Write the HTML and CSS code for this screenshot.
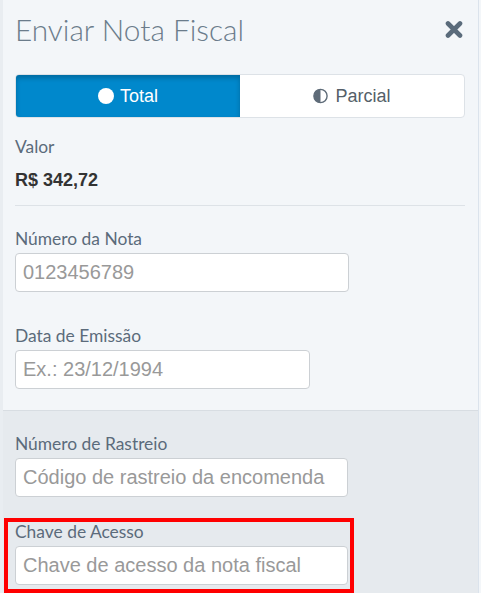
FILE: index.html
```html
<!DOCTYPE html>
<html lang="pt-BR">
<head>
<meta charset="utf-8">
<title>Enviar Nota Fiscal</title>
<link rel="stylesheet" href="styles.css">
</head>
<body>
<div class="panel">
  <div class="top">
    <div class="header">
      <h1 class="title">Enviar Nota Fiscal</h1>
      <button class="close" aria-label="Fechar">
        <svg width="18" height="17" viewBox="0 0 18 17"><path d="M3 2.5 L15 14.5 M15 2.5 L3 14.5" stroke="#5a6b7b" stroke-width="4.6" stroke-linecap="round"/></svg>
      </button>
    </div>
    <div class="toggle">
      <div class="opt active">
        <svg class="ico" width="16" height="16" viewBox="0 0 16 16"><circle cx="8" cy="8" r="8" fill="#fff"/></svg>
        <span>Total</span>
      </div>
      <div class="opt">
        <svg class="ico" width="15" height="16" viewBox="0 0 15 16"><circle cx="7.5" cy="8" r="6.6" fill="none" stroke="#5e6b78" stroke-width="1.4"/><path d="M7.5 1.4 A6.6 6.6 0 0 0 7.5 14.6 Z" fill="#5e6b78"/></svg>
        <span>Parcial</span>
      </div>
    </div>
    <div class="valor">
      <div class="label">Valor</div>
      <div class="amount">R$ 342,72</div>
    </div>
    <div class="field f-nota">
      <label class="label">Número da Nota</label>
      <input class="input w-nota" type="text" placeholder="0123456789">
    </div>
    <div class="field f-data">
      <label class="label">Data de Emissão</label>
      <input class="input w-data" type="text" placeholder="Ex.: 23/12/1994">
    </div>
  </div>
  <div class="bottom">
    <div class="field f-rastreio">
      <label class="label">Número de Rastreio</label>
      <input class="input w-rastreio" type="text" placeholder="Código de rastreio da encomenda">
    </div>
    <div class="highlight">
      <label class="label">Chave de Acesso</label>
      <input class="input w-chave" type="text" placeholder="Chave de acesso da nota fiscal">
    </div>
  </div>
</div>
</body>
</html>
```
FILE: styles.css
```css
html, body {
  margin: 0;
  padding: 0;
  height: 100%;
  overflow: hidden;
}
body {
  background: #f3f6f9;
  font-family: Lato, "Liberation Sans", sans-serif;
}
.panel {
  width: 479px;
  height: 593px;
  border-left: 3px solid #e9edf1;
  border-right: 1px solid #dbe3ec;
  background: #f3f6f9;
  display: flex;
  flex-direction: column;
  box-sizing: border-box;
}
.top {
  padding: 0 13px 0 12px;
}
.header {
  display: flex;
  justify-content: space-between;
  align-items: flex-start;
}
.title {
  margin: 0;
  padding-top: 12px;
  font-weight: 300;
  font-size: 29.8px;
  line-height: 36px;
  color: #6b7c8b;
}
.close {
  border: 0;
  background: none;
  padding: 0;
  margin: 21px 2px 0 0;
  width: 18px;
  height: 17px;
  display: block;
}
.close svg { display: block; }
.toggle {
  margin-top: 26px;
  display: flex;
  height: 44px;
  box-sizing: border-box;
  border: 1px solid #dde2e7;
  border-radius: 4px;
  background: #fff;
  overflow: hidden;
}
.opt {
  flex: 1;
  display: flex;
  align-items: center;
  justify-content: center;
  gap: 6px;
  font-family: "Liberation Sans", Arial, sans-serif;
  font-size: 18px;
  color: #555f69;
}
.opt:last-child { gap: 7px; }
.opt.active {
  background: #0088cc;
  color: #fff;
  box-shadow: inset 0 3px 5px rgba(0,0,0,0.22);
}
.ico { display: block; }
.label {
  display: block;
  font-size: 17.4px;
  color: #5b6b7b;
  line-height: 20px;
}
.valor {
  padding-top: 19px;
  padding-bottom: 15px;
  border-bottom: 1px solid #dde2e7;
}
.amount {
  margin-top: 13px;
  font-family: "Liberation Sans", Arial, sans-serif;
  font-weight: bold;
  font-size: 18px;
  color: #333;
  line-height: 20px;
}
.field { display: block; }
.f-nota { margin-top: 23px; }
.f-data { margin-top: 34px; padding-bottom: 21px; }
.input {
  display: block;
  margin-top: 4px;
  height: 39px;
  box-sizing: border-box;
  border: 1px solid #ccd0d4;
  border-radius: 4px;
  background: #fff;
  padding: 0 7px;
  font-family: "Liberation Sans", Arial, sans-serif;
  font-size: 20px;
  color: #555;
  outline: none;
}
.input::placeholder { color: #999; }
.w-nota { width: 334px; }
.w-data { width: 295px; }
.w-rastreio { width: 333px; }
.w-chave { width: 333px; }
.bottom {
  flex: 1;
  background: #e6eaee;
  border-top: 1px solid #d8dde2;
  padding: 0 13px 0 12px;
}
.f-rastreio { padding-top: 23px; }
.highlight {
  margin: 21px 0 0 -11px;
  width: 350px;
  box-sizing: border-box;
  border: 4px solid #ff0000;
  padding: 0 0 4px 7px;
}
```
